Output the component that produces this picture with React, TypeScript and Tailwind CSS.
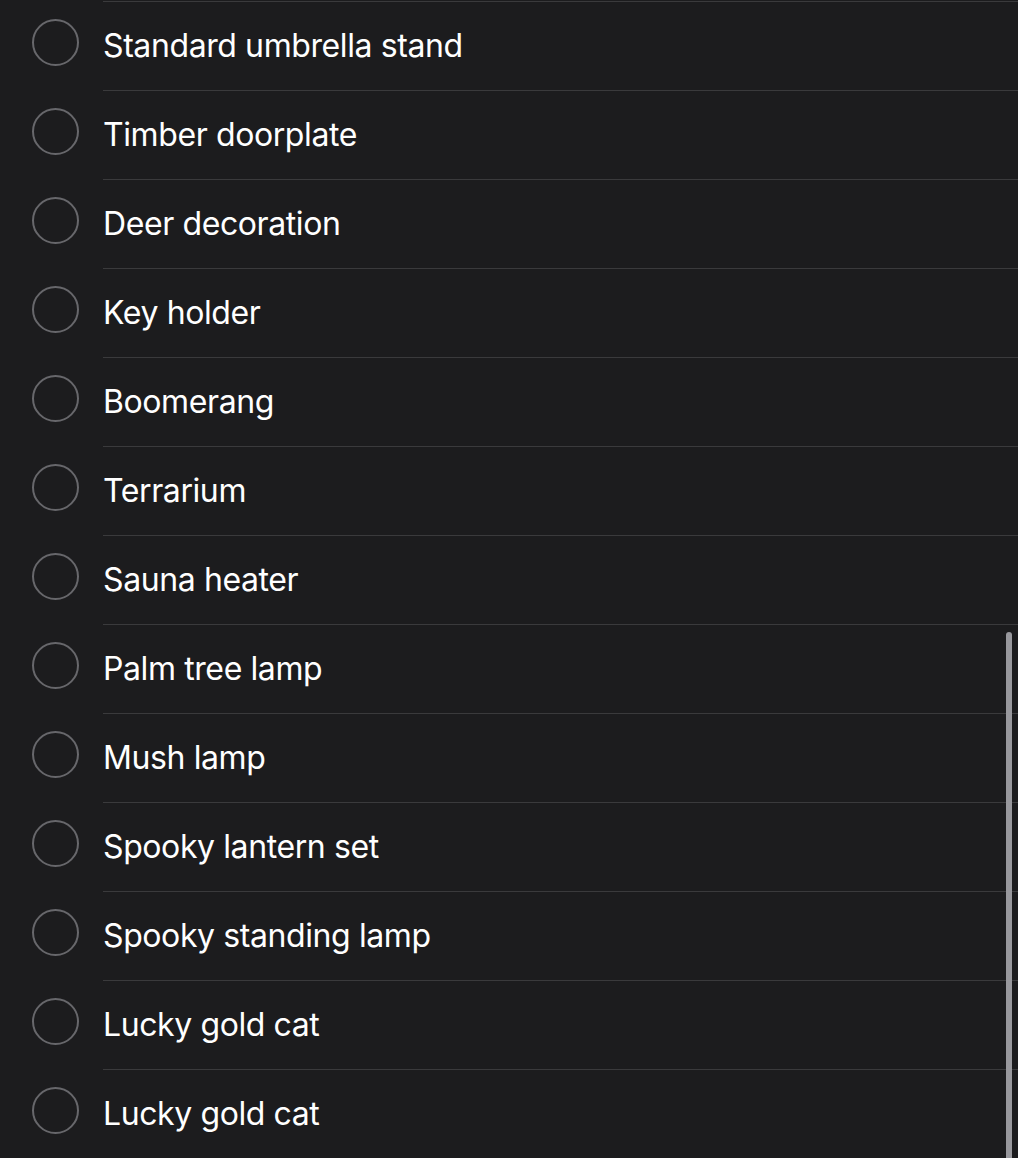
const items = [
  'Standard umbrella stand',
  'Timber doorplate',
  'Deer decoration',
  'Key holder',
  'Boomerang',
  'Terrarium',
  'Sauna heater',
  'Palm tree lamp',
  'Mush lamp',
  'Spooky lantern set',
  'Spooky standing lamp',
  'Lucky gold cat',
  'Lucky gold cat',
];

export default function App() {
  return (
    <div className="relative min-h-[1158px] w-full overflow-hidden bg-[#1c1c1e] pt-px font-['Inter',sans-serif] text-white">
      <ul>
        {items.map((name, i) => (
          <li key={i} className="flex h-[89px] items-stretch">
            <div className="flex w-[103px] shrink-0 items-center justify-center">
              <span className="ml-[7px] mt-[-6px] block h-[47px] w-[47px] rounded-full border-[2.5px] border-[#67676b]" />
            </div>
            <div className="flex flex-1 items-center border-t border-[#3a3a3c] pb-[1px] text-[32px] tracking-[-0.4px]">
              {name}
            </div>
          </li>
        ))}
      </ul>
      <div className="absolute right-[6px] top-[632px] h-[540px] w-[6px] rounded-full bg-[#98989d]" />
    </div>
  );
}
